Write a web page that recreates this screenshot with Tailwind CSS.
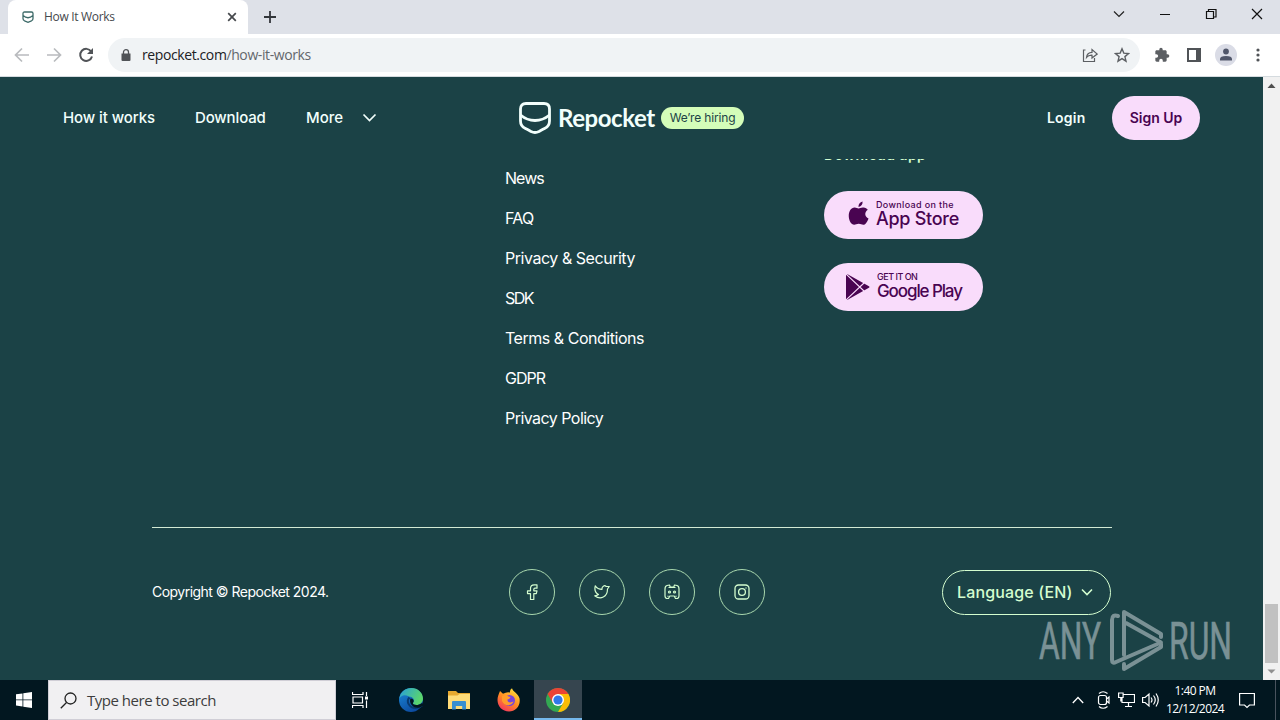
<!DOCTYPE html>
<html lang="en">
<head>
  <meta charset="UTF-8">
  <meta name="viewport" content="width=device-width, initial-scale=1.0">
  <title>How It Works</title>
  <script src="https://cdn.jsdelivr.net/npm/@tailwindcss/browser@4"></script>
</head>
<body class="w-[1280px] h-[720px] overflow-hidden flex flex-col bg-[#1b4246] font-['Open_Sans','Noto_Sans',sans-serif]">

  <!-- Tab strip -->
  <div class="h-[34px] shrink-0 bg-[#dee1e8] flex items-stretch pl-2">
    <div class="w-[240px] bg-white rounded-t-lg flex items-center pl-[14px] pr-[10px]">
      <svg class="w-3 h-3 shrink-0" viewBox="0 0 12 12" fill="none" stroke="#3c6a68" stroke-width="1.3"><path d="M2.5 1h7Q11 1 11 2.500V7.500Q11 9 9.500 9.800L6 11.300 2.500 9.800Q1 9 1 7.500V2.500Q1 1 2.500 1ZM1 4.500Q6 9 11 4.500"/></svg>
      <span class="ml-[10px] text-[12px] tracking-[-0.32px] text-[#45484c] whitespace-nowrap">How It Works</span>
      <svg class="ml-auto w-3 h-3" viewBox="0 0 12 12" stroke="#45484c" stroke-width="1.7"><path d="M2.200 2.200l7.600 7.600M9.800 2.200L2.200 9.800"/></svg>
    </div>
    <svg class="w-3 h-[34px] ml-4" viewBox="0 0 12 34" stroke="#33363b" stroke-width="1.8"><path d="M6 11v12M0 17h12"/></svg>
    <div class="ml-auto flex items-center -mt-[6px]">
      <svg class="w-12 h-7" viewBox="0 0 48 28" fill="none" stroke="#222" stroke-width="1.200"><path d="M20 11.500l5 5 5-5"/></svg>
      <svg class="w-11 h-7" viewBox="0 0 44 28" stroke="#111" stroke-width="1"><path d="M18 14.500h10"/></svg>
      <svg class="w-12 h-7" viewBox="0 0 48 28" fill="none" stroke="#111" stroke-width="1.200"><path d="M20.500 11.500h7v7h-7zM22.500 11.500v-2h7.500v7.500h-2.500"/></svg>
      <svg class="w-[46px] h-7" viewBox="0 0 46 28" stroke="#111" stroke-width="1.200"><path d="M18 9l10 10M28 9L18 19"/></svg>
    </div>
  </div>

  <!-- Toolbar -->
  <div class="h-[43px] shrink-0 bg-white border-b border-[#d5dbdf] flex items-center pl-[14px]">
    <svg class="w-4 h-4" viewBox="0 0 16 16" fill="none" stroke="#b9bbbe" stroke-width="1.700"><path d="M15 8H2M8 1.500L1.500 8 8 14.500"/></svg>
    <svg class="w-4 h-4 ml-4" viewBox="0 0 16 16" fill="none" stroke="#b9bbbe" stroke-width="1.700"><path d="M1 8h13M8 1.500L14.500 8 8 14.500"/></svg>
    <svg class="w-4 h-4 ml-4" viewBox="0 0 16 16" fill="none" stroke="#505357" stroke-width="2"><path d="M13.200 4.500A6 6 0 1 0 14 9.500"/><path d="M15 1v6H9z" fill="#505357" stroke="none"/></svg>
    <div class="ml-[14px] w-[1032px] h-[34px] rounded-full bg-[#f0f3f5] flex items-center pl-[13px] pr-[10px]">
      <svg class="w-[10px] h-3" viewBox="0 0 10 12"><path d="M0.500 4.500h9V11q0 1-1 1h-7q-1 0-1-1z" fill="#505357"/><path d="M2.500 5V3a2.500 2.300 0 0 1 5 0v2" fill="none" stroke="#505357" stroke-width="1.300"/></svg>
      <span class="ml-[11px] text-[14px] leading-5 tracking-[-0.4px] text-[#63676c] whitespace-nowrap"><span class="text-[#202124]">repocket.com</span>/how-it-works</span>
      <svg class="ml-auto w-4 h-4" viewBox="0 0 16 16" fill="none" stroke="#5c5f63" stroke-width="1.200"><path d="M3.500 3H1.500v11.500h11V11"/><path d="M4.500 10.500Q5 5.500 10 5.300V2.500L15.200 7 10 11V8.200Q6.500 8 4.500 10.500z"/></svg>
      <svg class="ml-4 w-4 h-4" viewBox="0 0 16 16" fill="none" stroke="#5c5f63" stroke-width="1.400"><path d="M8 1.800l1.800 4.300 4.700.4-3.600 3.100 1.100 4.600L8 11.700l-4 2.500 1.100-4.600L1.500 6.500l4.700-.4z"/></svg>
    </div>
    <svg class="ml-[14px] w-4 h-4 mr-px" viewBox="0 0 24 24" fill="#5c5f63"><path d="M20.500 11H19V7c0-1.100-.9-2-2-2h-4V3.500a2.500 2.500 0 0 0-5 0V5H4c-1.100 0-2 .9-2 2v3.800h1.500a2.700 2.700 0 0 1 0 5.400H2V20c0 1.100.9 2 2 2h3.800v-1.500a2.700 2.700 0 0 1 5.400 0V22H17c1.100 0 2-.9 2-2v-4h1.500a2.500 2.500 0 0 0 0-5z"/></svg>
    <svg class="ml-4 w-[14px] h-[14px]" viewBox="0 0 14 14"><path d="M1 1h12v12H1z" fill="none" stroke="#505357" stroke-width="2"/><path d="M9 1h4v12H9z" fill="#505357"/></svg>
    <svg class="ml-[14px] w-[22px] h-[22px]" viewBox="0 0 22 22"><circle cx="11" cy="11" r="11" fill="#dadce6"/><circle cx="11" cy="7.500" r="2.900" fill="#50566a"/><path d="M5 16.500v-1.500q0-3 6-3t6 3v1.500z" fill="#50566a"/></svg>
    <svg class="ml-[19px] w-1 h-4" viewBox="0 0 4 16" fill="#505357"><circle cx="2" cy="3" r="1.600"/><circle cx="2" cy="8" r="1.600"/><circle cx="2" cy="13" r="1.600"/></svg>
  </div>

  <!-- Page -->
  <div class="h-[603px] shrink-0 flex relative">
    <div class="w-[1263px] flex flex-col font-['Inter','Open_Sans',sans-serif]">
      <header class="h-[82px] shrink-0 flex items-center px-[63px] text-[#f2fffc] text-[15px] font-medium whitespace-nowrap">
        <nav class="w-[456px] flex items-center">
          <a class="w-[132px] tracking-[-0.08px]">How it works</a>
          <a class="w-[111px] tracking-[-0.15px]">Download</a>
          <a class="w-[56px]">More</a>
          <svg class="w-4 h-4" viewBox="0 0 16 16" fill="none" stroke="#f2fffc" stroke-width="1.700"><path d="M1.500 4.500L7.500 10.500 13.500 4.500"/></svg>
        </nav>
        <div class="flex items-center">
          <svg class="w-8 h-8 -mt-px" viewBox="0 0 32 32" fill="none" stroke="#f2fffc" stroke-width="2.800"><path d="M7 1.500h18q5.500 0 5.500 5.500V19q0 5-4.500 7.200-3 1.500-6 3.300-4 2-8 0-3-1.800-6-3.300-4.500-2.200-4.500-7.200V7Q1.500 1.500 7 1.500z"/><path d="M1.500 13Q8 18.500 16 18.500T30.500 13"/></svg>
          <span class="ml-[7px] w-[103px] text-[24px] leading-8 font-bold tracking-[-0.45px] font-['Lato','Open_Sans',sans-serif]">Repocket</span>
          <span class="w-[83px] h-[22px] rounded-full bg-[#d4fdb9] text-[#1c4347] text-[12px] tracking-[-0.15px] font-normal flex items-center justify-center">We’re hiring</span>
        </div>
        <div class="ml-auto flex items-center font-semibold text-[14px]">
          <a class="-mt-px w-[65px] tracking-[0.2px]">Login</a>
          <a class="w-[88px] h-11 rounded-full bg-[#f9dcfb] text-[#490451] flex items-center justify-center pb-px">Sign Up</a>
        </div>
      </header>

      <footer class="grow overflow-hidden pl-[152px] pr-[151px] text-white">
        <div class="h-[369px] flex border-b border-[#d3e9d4]">
          <ul class="-mt-px ml-[353px] w-[319px] text-[16px] leading-10 whitespace-nowrap">
            <li class="tracking-[-0.95px]">News</li>
            <li class="tracking-[-0.7px]">FAQ</li>
            <li class="tracking-[-0.46px]">Privacy &amp; Security</li>
            <li class="tracking-[-1.5px]">SDK</li>
            <li class="tracking-[-0.47px]">Terms &amp; Conditions</li>
            <li class="tracking-[-1px]">GDPR</li>
            <li class="tracking-[-0.54px]">Privacy Policy</li>
          </ul>
          <div class="flex flex-col">
            <h3 class="-mt-[14px] mb-[26px] h-5 text-[14px] leading-5 tracking-[0.45px] font-semibold text-[#d4fdd0]">Download app</h3>
            <a class="w-[159px] h-12 rounded-full bg-[#f9dcfb] text-[#490451] flex items-center pl-6">
              <svg class="w-[21px] h-[26px] -mt-[3px]" viewBox="0 0 21 26" fill="#490451"><path d="M10.500 7.500C12 7.500 13 6.300 15.500 6.500c2 .1 3.400 1.100 4.300 2.300-3.800 2.500-3 7.200.7 8.600-.8 2.500-2.700 6.300-5.200 6.400-1.700 0-2.400-1-4.600-1s-2.900 1-4.500 1C3.200 23.800 1 19.500.8 15.800.400 10.300 3.200 6.700 6.600 6.600c1.800 0 2.900.9 3.900.9z"/><path d="M10.500 6Q10.300 1.800 14.600.5 14.800 4.700 10.500 6z"/></svg>
              <span class="ml-[7px] -mt-[2px] flex flex-col whitespace-nowrap">
                <span class="text-[9px] leading-[10px] font-medium tracking-[0.35px]">Download on the</span>
                <span class="text-[18px] leading-[18px] font-medium tracking-[-0.28px]">App Store</span>
              </span>
            </a>
            <a class="mt-6 w-[159px] h-12 rounded-full bg-[#f9dcfb] text-[#490451] flex items-center pl-[22px]">
              <svg class="w-6 h-[26px]" viewBox="0 0 24 26"><path d="M0 1.500Q0-.5 2 .6L22.500 12q2 1 0 2L2 25.400Q0 26.500 0 24.500z" fill="#490451"/><path d="M0 0L18 17M0 26L18 9" stroke="#f9dcfb" stroke-width="1.100"/></svg>
              <span class="ml-[7px] -mt-[2px] flex flex-col whitespace-nowrap">
                <span class="text-[9px] leading-[10px] font-medium tracking-[-0.5px]">GET IT ON</span>
                <span class="text-[17px] leading-[18px] font-medium tracking-[-1.1px]">Google Play</span>
              </span>
            </a>
          </div>
        </div>
        <div class="h-[128px] flex items-center">
          <p class="w-[357px] pb-[2px] text-[14px] tracking-[-0.52px] whitespace-nowrap">Copyright © Repocket 2024.</p>
          <div class="flex gap-6">
            <a class="w-[46px] h-[46px] rounded-full border border-[#a9d8ae] flex items-center justify-center">
              <svg class="w-4 h-4" viewBox="0 0 16 16" fill="none" stroke="#d4fdcf" stroke-width="1.200" stroke-linejoin="round"><path d="M13 .8v3.400h-2q-1.200 0-1.200 1.200v1.400H13l-.7 2.800H9.800v5.900H6.500V9.600H3.500V6.800h3V4.600Q6.500.8 10.200.8z"/></svg>
            </a>
            <a class="w-[46px] h-[46px] rounded-full border border-[#a9d8ae] flex items-center justify-center">
              <svg class="w-4 h-4" viewBox="0 0 16 16" fill="none" stroke="#d4fdcf" stroke-width="1.200" stroke-linejoin="round"><path d="M15.200 2.500h-3C10.500.8 7.700 2.300 8 5.300 5 5.300 2.800 4 1.300 1.800.300 5.500 1.500 8.800 4.500 10.500q-1.500 1.200-3.800 1.300C6.500 16.200 13.500 13 13.500 5z"/></svg>
            </a>
            <a class="w-[46px] h-[46px] rounded-full border border-[#a9d8ae] flex items-center justify-center">
              <svg class="w-4 h-4" viewBox="0 0 16 16" fill="none" stroke="#d4fdcf" stroke-width="1.200" stroke-linejoin="round"><path d="M5.500 1L3 1.500Q1 2 1 5v7q0 2.500 2.500 2.500h1L5.800 12h4.400l1.300 2.500h1Q15 14.500 15 12V5q0-3-2-3.500L10.500 1 9.800 3H6.200zM4.500 3.500h7M4.500 12.500L3.500 12M11.500 12.500l1-.5"/><circle cx="5.500" cy="8" r="1"/><circle cx="10.500" cy="8" r="1"/></svg>
            </a>
            <a class="w-[46px] h-[46px] rounded-full border border-[#a9d8ae] flex items-center justify-center">
              <svg class="w-4 h-4" viewBox="0 0 16 16" fill="none" stroke="#d4fdcf" stroke-width="1.300"><rect x="1" y="1" width="14" height="14" rx="3.500"/><circle cx="8" cy="8" r="3.400"/><path d="M12 3.500v1"/></svg>
            </a>
          </div>
          <a class="mt-px ml-auto mr-[1px] w-[169px] h-[45px] rounded-full border border-[#d4fdcf] text-[#d4fdcf] text-[16px] tracking-[0.15px] font-medium flex items-center pl-[14px] pb-px whitespace-nowrap">
            <span class="w-[123px]">Language (EN)</span>
            <svg class="w-4 h-4" viewBox="0 0 16 16" fill="none" stroke="#d4fdcf" stroke-width="1.600"><path d="M2 5.500L7 10.500 12 5.500"/></svg>
          </a>
        </div>
      </footer>
    </div>

    <!-- Scrollbar -->
    <div class="w-[17px] bg-[#f1f1f1] flex flex-col items-center">
      <svg class="w-[17px] h-[17px]" viewBox="0 0 17 17"><path d="M4.500 11L8.500 6.500 12.500 11z" fill="#505050"/></svg>
      <div class="mt-auto w-[13px] h-[59px] bg-[#c1c1c1]"></div>
      <svg class="w-[17px] h-[17px]" viewBox="0 0 17 17"><path d="M4.500 6.500L8.500 10.500 12.500 6.500z" fill="#909090"/></svg>
    </div>

    <!-- Watermark -->
    <svg class="absolute left-[1036px] top-[530px] w-[204px] h-[68px] opacity-60" viewBox="0 0 204 68" fill="#b9c6ca">
      <g font-family="Roboto, sans-serif" font-size="52" stroke="#b9c6ca" stroke-width=".6">
        <text x="3" y="52" textLength="62" lengthAdjust="spacingAndGlyphs">ANY</text>
        <text x="133" y="52" textLength="63" lengthAdjust="spacingAndGlyphs">RUN</text>
      </g>
      <g fill="none" stroke="#b9c6ca" stroke-width="4" stroke-linejoin="round" stroke-linecap="round"><path d="M88 48V5L125 27v3M82 9q-6-2-6 4v40q0 4 4 2L125 35.500 90 16M88 57v5L125 40V37"/></g>
    </svg>
  </div>

  <!-- Taskbar -->
  <div class="h-10 shrink-0 bg-[#021720] flex items-stretch">
    <div class="w-12 flex items-center justify-center">
      <svg class="w-4 h-4" viewBox="0 0 16 16" fill="#fff"><path d="M0 2.300l6.500-.9v6.100H0zM7.300 1.300L16 0v7.500H7.300zM0 8.300h6.500v6.100L0 13.500zM7.300 8.300H16V16l-8.700-1.300z"/></svg>
    </div>
    <div class="w-[288px] bg-[#f1f0f2] border border-[#d0ced6] flex items-center pl-[11px]">
      <svg class="w-[17px] h-[17px]" viewBox="0 0 17 17" fill="none" stroke="#222" stroke-width="1.300"><circle cx="10.500" cy="6.500" r="5.500"/><path d="M6.500 10.500L.8 16.200"/></svg>
      <span class="ml-[10px] text-[15px] tracking-[-0.48px] text-[#3d3d3d]">Type here to search</span>
    </div>
    <div class="w-12 mr-[3px] flex items-center justify-center">
      <svg class="w-4 h-4" viewBox="0 0 16 16" fill="none" stroke="#fff" stroke-width="1.200"><path d="M.5 0v2.500h10.500V0M.5 16v-2.500h10.500V16M1 5h9.500v6H1zM14.500 0v4M14.500 8.500V16"/><path d="M13 4.500h3v3h-3z" fill="#fff" stroke="none"/></svg>
    </div>
    <div class="w-12 flex items-center justify-center">
      <svg class="w-6 h-6" viewBox="0 0 24 24">
        <defs>
          <linearGradient id="edgeTop" x1="0" y1="0" x2="1" y2=".4"><stop offset="0" stop-color="#279edb"/><stop offset="1" stop-color="#5bd66c"/></linearGradient>
          <linearGradient id="edgeLow" x1="0" y1="0" x2=".6" y2="1"><stop offset="0" stop-color="#1b8ad9"/><stop offset="1" stop-color="#0c4a9f"/></linearGradient>
        </defs>
        <circle cx="12" cy="12" r="12" fill="url(#edgeLow)"/>
        <path d="M.3 10.500C1.500 4 6.500 0 12.500 0 19 0 24 5 24 10.500c0 4-3 6.500-6.500 6.500-2.500 0-4-1-3.500-2.200 2.500-3-.5-6.300-4-6.300C5.500 6 2 7.500.3 10.500z" fill="url(#edgeTop)"/>
        <path d="M10.500 9.500c-4 4 0 10.500 6 10.500 3 0 5-1 6.500-2.500" fill="none" stroke="#083a70" stroke-width="2"/>
        <path d="M11.500 10.500c3 0 4 2.500 2.500 4.300-.5 1.200 1 2.200 3.500 2.200 1.500 0 3.500-.5 5.500-2l1.500 2q-2 2-4 2.500c-6 1.500-11-4-9-9z" fill="#021720"/>
      </svg>
    </div>
    <div class="w-12 flex items-center justify-center">
      <svg class="w-[22px] h-[19px]" viewBox="0 0 22 19"><path d="M0 0h8l2 2H22v16H0z" fill="#e7a92f"/><path d="M0 4.500h9.500l2-1.500H22v15H0z" fill="#ffdc78"/><path d="M4 18.500V11q0-1 1-1h12q1 0 1 1v7.500h-3.800V15H7.800v3.500z" fill="#388fd0"/></svg>
    </div>
    <div class="w-[51px] flex items-center justify-center">
      <svg class="w-6 h-6" viewBox="0 0 24 24">
        <defs><linearGradient id="fox" x1=".8" y1="0" x2=".2" y2="1"><stop offset="0" stop-color="#ffe43d"/><stop offset=".5" stop-color="#ff8b22"/><stop offset="1" stop-color="#f42f62"/></linearGradient></defs>
        <path d="M3 3l3 2.800Q10 3.500 13 4.500 12.500 2 15 .3c.5 3 6 5 7.500 10C24 18 18.500 23.500 12 23.500S.5 18.500.5 12C.5 9 1.500 6.500 3 3z" fill="url(#fox)"/>
        <circle cx="12.500" cy="12.500" r="5.500" fill="#7744dc"/>
        <path d="M5 8q4-2 6.500.5l2 .5q-.5 2-3 2.500c-.5 3 4 4 6 1.500-.5 5-9 6-11.500 0z" fill="#ff9c2a"/>
      </svg>
    </div>
    <div class="w-12 bg-[#36454f] border-b-2 border-[#76b9ed] flex items-center justify-center">
      <svg class="w-6 h-6 mt-[2px]" viewBox="0 0 24 24">
        <circle cx="12" cy="12" r="12" fill="#33a852"/>
        <path d="M1.600 6A12 12 0 0 1 22.400 6H12L6.800 15z" fill="#ea4335"/>
        <path d="M22.400 6A12 12 0 0 1 12 24L17.200 15 12 6z" fill="#fbbc05"/>
        <circle cx="12" cy="12" r="6" fill="#fff"/>
        <circle cx="12" cy="12" r="4.600" fill="#2f78e9"/>
      </svg>
    </div>
    <div class="ml-auto flex items-center text-white">
      <svg class="w-3 h-10" viewBox="0 0 12 40" fill="none" stroke="#fff" stroke-width="1.300"><path d="M.8 23L6 17.500 11.200 23"/></svg>
      <svg class="ml-[13px] w-[14px] h-5" viewBox="0 0 14 20" fill="none" stroke="#fff" stroke-width="1.200"><rect x="1.500" y="5.500" width="8" height="9" rx="2"/><path d="M9.500 9l2.500-2v6l-2.500-2M2 3.500Q6 0 10.500 3.500M2 16.500Q6 20 10.500 16.500"/></svg>
      <svg class="ml-[7px] w-[17px] h-4" viewBox="0 0 17 16" fill="none" stroke="#fff" stroke-width="1.200"><path d="M5.500 2.500h11v8H4V6M10.500 10.500v3.500M7 14.500h7M.6 1h4.500v4.500H.6zM2.800 5.500V9H4"/></svg>
      <svg class="ml-[7px] w-[17px] h-4" viewBox="0 0 17 16" fill="none" stroke="#fff" stroke-width="1.200"><path d="M.6 5.500h2.500L7 2v12L3.100 10.500H.6zM9 5.500q2 2.500 0 5M11.500 3.500q3.500 4.500 0 9M14 1.500q4.500 6.500 0 13"/></svg>
      <div class="ml-[6px] w-[60px] text-center text-[12px] leading-[18px] tracking-[-0.55px] whitespace-nowrap">
        <div>1:40 PM</div>
        <div>12/12/2024</div>
      </div>
      <svg class="ml-[14px] w-4 h-[17px]" viewBox="0 0 16 17" fill="none" stroke="#fff" stroke-width="1.200"><path d="M.6 1.500h14.800v11.500h-4.900L8 15.500 5.500 13H.6z"/></svg>
      <div class="ml-5 w-[5px] h-10 border-l border-[#49535e]"></div>
    </div>
  </div>

</body>
</html>
